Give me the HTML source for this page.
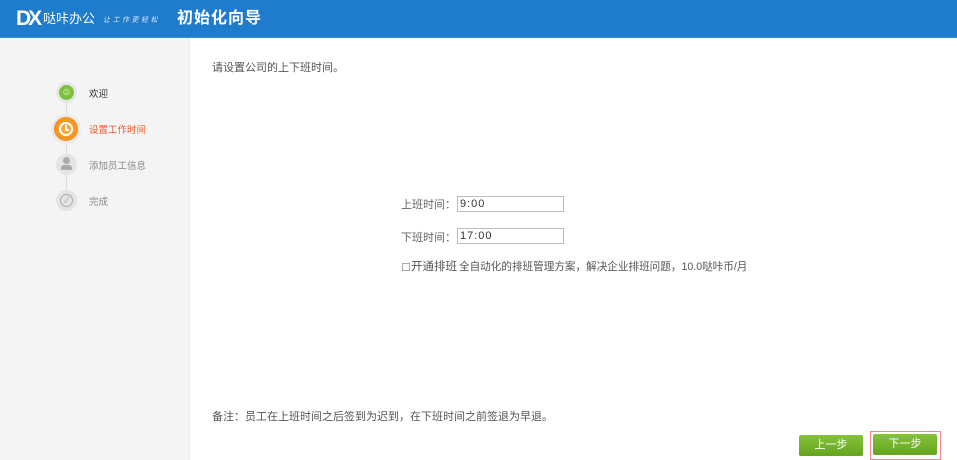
<!DOCTYPE html>
<html><head><meta charset="utf-8"><style>
*{margin:0;padding:0;box-sizing:border-box}
body{width:957px;height:460px;overflow:hidden;background:#fff;font-family:"Liberation Sans","Noto Sans CJK SC",sans-serif;position:relative}
.hd{position:absolute;left:0;top:0;width:957px;height:38px;background:#1f7bcc;border-bottom:1px solid #3b8fdc}
.sb{position:absolute;left:0;top:38px;width:190px;height:422px;background:#f4f4f4;border-right:1px solid #ebebeb}
.t{position:absolute;white-space:nowrap}
.c{position:absolute;border-radius:50%}
.line{position:absolute;left:66px;width:1px;background:#dcdcdc}
input{position:absolute;height:16px;border:1px solid #bbb;font:11px "Liberation Sans",sans-serif;letter-spacing:1px;padding-left:2px;color:#333;width:107px}
.btn{position:absolute;height:21px;width:64px;background:linear-gradient(#86c23a,#63a51d);border-radius:2px;color:#fff;font-size:11px;text-align:center;line-height:21px}
</style></head><body>
<div class="hd">
<div class="t" style="left:16px;top:8px;color:#fff;font-weight:bold;font-size:21px;line-height:21px;letter-spacing:-3px">DX</div>
<div class="t" style="left:43px;top:10px;color:#fff;font-size:13px;line-height:17px">哒咔办公</div>
<div class="t" style="left:103px;top:15px;color:#dce9f7;font-size:7px;font-style:italic;letter-spacing:2.5px">让工作更轻松</div>
<div class="t" style="left:177px;top:9px;color:#fff;font-size:16px;font-weight:bold;line-height:20px;letter-spacing:1px">初始化向导</div>
</div>
<div class="sb"></div>
<div class="line" style="top:100px;height:100px"></div>
<div class="c" style="left:56px;top:82px;width:21px;height:21px;background:#e6e6e6"></div>
<div class="c" style="left:59px;top:85px;width:15px;height:15px;background:#7cc03b;color:#fff;font-size:10px;text-align:center;line-height:15px">☺</div>
<div class="t" style="left:89px;top:86px;font-size:9.5px;color:#333">欢迎</div>
<div class="c" style="left:51px;top:114px;width:30px;height:30px;background:#eaeaea"></div>
<div class="c" style="left:54px;top:117px;width:24px;height:24px;background:radial-gradient(#ffae3a,#f08410)"></div>
<div class="c" style="left:59px;top:122px;width:14px;height:14px;border:2px solid #fff"></div>
<div style="position:absolute;left:65px;top:125px;width:1.5px;height:5px;background:#fff"></div>
<div style="position:absolute;left:65px;top:129px;width:4px;height:1.5px;background:#fff"></div>
<div class="t" style="left:89px;top:122px;font-size:9.5px;color:#f05a28">设置工作时间</div>
<div class="c" style="left:56px;top:154px;width:21px;height:21px;background:#e4e4e4"></div>
<div class="c" style="left:63px;top:157px;width:7px;height:7px;background:#aaa"></div>
<div style="position:absolute;left:61px;top:165px;width:11px;height:5px;background:#aaa;border-radius:3px 3px 0 0"></div>
<div class="t" style="left:89px;top:158px;font-size:9.5px;color:#888">添加员工信息</div>
<div class="c" style="left:56px;top:190px;width:21px;height:21px;background:#e4e4e4"></div>
<div class="c" style="left:60px;top:194px;width:13px;height:13px;border:1px solid #aaa;color:#aaa;font-size:8px;text-align:center;line-height:11px">✓</div>
<div class="t" style="left:89px;top:194px;font-size:9.5px;color:#888">完成</div>
<div class="t" style="left:212px;top:59px;font-size:11px;color:#555">请设置公司的上下班时间。</div>
<div class="t" style="left:401px;top:196px;font-size:11px;color:#666">上班时间：</div>
<input style="left:457px;top:196px" value="9:00">
<div class="t" style="left:401px;top:229px;font-size:11px;color:#666">下班时间：</div>
<input style="left:457px;top:228px" value="17:00">
<div style="position:absolute;left:402px;top:263px;width:8px;height:8px;border:1px solid #aaa"></div>
<div class="t" style="left:411px;top:258px;font-size:11.5px;color:#555">开通排班</div>
<div class="t" style="left:459px;top:259px;font-size:10.6px;color:#555">全自动化的排班管理方案，解决企业排班问题，10.0哒咔币/月</div>
<div class="t" style="left:212px;top:408px;font-size:11px;color:#555">备注：员工在上班时间之后签到为迟到，在下班时间之前签退为早退。</div>
<div class="btn" style="left:799px;top:435px">上一步</div>
<div style="position:absolute;left:870px;top:431px;width:71px;height:29px;border:1px solid #f08a8a"></div>
<div class="btn" style="left:873px;top:434px">下一步</div>
</body></html>
